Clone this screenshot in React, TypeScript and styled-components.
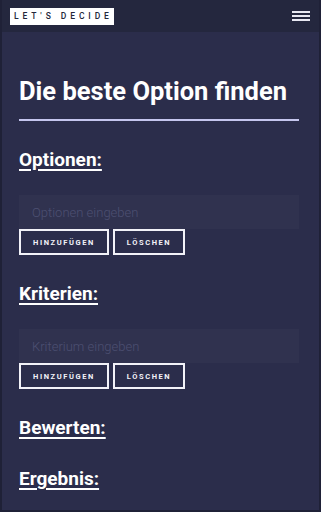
import * as React from 'react';
import styled, { createGlobalStyle } from 'styled-components';

const GlobalStyle = createGlobalStyle`
    html, body {
        margin: 0;
        padding: 0;
        background: #2b2d4b;
    }
    body {
        font-family: Roboto, "Liberation Sans", Arial, sans-serif;
    }
`;

const Page = styled.div`
    box-sizing: border-box;
    width: 321px;
    height: 512px;
    overflow: hidden;
    background: #2b2d4b;
    border: 2px solid #1f2137;
    border-top: none;
`;

const Header = styled.header`
    height: 32px;
    background: #24273e;
    display: flex;
    align-items: center;
    justify-content: space-between;
    padding: 0 9px 0 8px;
`;

const Logo = styled.div`
    margin-top: 1px;
    background: #ffffff;
    color: #23263a;
    font-size: 8.5px;
    font-weight: 500;
    letter-spacing: 3.9px;
    padding: 2px 1px 2px 4px;
    line-height: 13px;
`;

const Burger = styled.button`
    background: none;
    border: none;
    padding: 0;
    width: 18px;
    display: flex;
    flex-direction: column;
    gap: 2px;
    span {
        display: block;
        height: 2px;
        background: #e8e8f2;
    }
`;

const Main = styled.main`
    padding: 44px 20px 0 17px;
`;

const Title = styled.h1`
    color: #ffffff;
    font-size: 25.5px;
    font-weight: 700;
    margin: 0;
    padding-bottom: 13px;
    border-bottom: 2px solid #c5c6ee;
    line-height: 30px;
`;

const Section = styled.section<{ $gap: number }>`
    margin-top: ${(p) => p.$gap}px;
`;

const SectionTitle = styled.h2`
    color: #ffffff;
    font-size: 19px;
    font-weight: 700;
    text-decoration: underline;
    text-decoration-thickness: 2px;
    text-underline-offset: 3px;
    margin: 0;
    line-height: 22px;
`;

const Input = styled.input<{ $gap: number }>`
    box-sizing: border-box;
    display: block;
    width: 100%;
    height: 34px;
    margin-top: ${(p) => p.$gap}px;
    background: #30324f;
    border: none;
    outline: none;
    padding: 0 13px;
    font-family: Roboto, "Liberation Sans", Arial, sans-serif;
    font-size: 13px;
    font-weight: 300;
    color: #ffffff;
    &::placeholder {
        color: #4d5072;
    }
`;

const ButtonRow = styled.div`
    display: flex;
    gap: 4px;
`;

const Button = styled.button<{ $width: number }>`
    box-sizing: border-box;
    width: ${(p) => p.$width}px;
    height: 26px;
    background: #2b2d4b;
    border: 2px solid #f2f2f8;
    color: #f2f2f8;
    font-family: Roboto, "Liberation Sans", Arial, sans-serif;
    font-size: 7.5px;
    font-weight: 700;
    letter-spacing: 1.6px;
    padding: 0;
`;

interface IInputBlockProps {
    title: string;
    placeholder: string;
    gap: number;
    inputGap: number;
}

const InputBlock = (props: IInputBlockProps) => (
    <Section $gap={props.gap}>
        <SectionTitle>{props.title}</SectionTitle>
        <Input $gap={props.inputGap} placeholder={props.placeholder} />
        <ButtonRow>
            <Button $width={90}>HINZUFÜGEN</Button>
            <Button $width={72}>LÖSCHEN</Button>
        </ButtonRow>
    </Section>
);

export default function App() {
    return (
        <Page>
            <GlobalStyle />
            <Header>
                <Logo>LET'S DECIDE</Logo>
                <Burger aria-label="Menü">
                    <span />
                    <span />
                    <span />
                </Burger>
            </Header>
            <Main>
                <Title>Die beste Option finden</Title>
                <InputBlock title="Optionen:" placeholder="Optionen eingeben" gap={28} inputGap={24} />
                <InputBlock title="Kriterien:" placeholder="Kriterium eingeben" gap={28} inputGap={24} />
                <Section $gap={28}>
                    <SectionTitle>Bewerten:</SectionTitle>
                </Section>
                <Section $gap={29}>
                    <SectionTitle>Ergebnis:</SectionTitle>
                </Section>
            </Main>
        </Page>
    );
}
